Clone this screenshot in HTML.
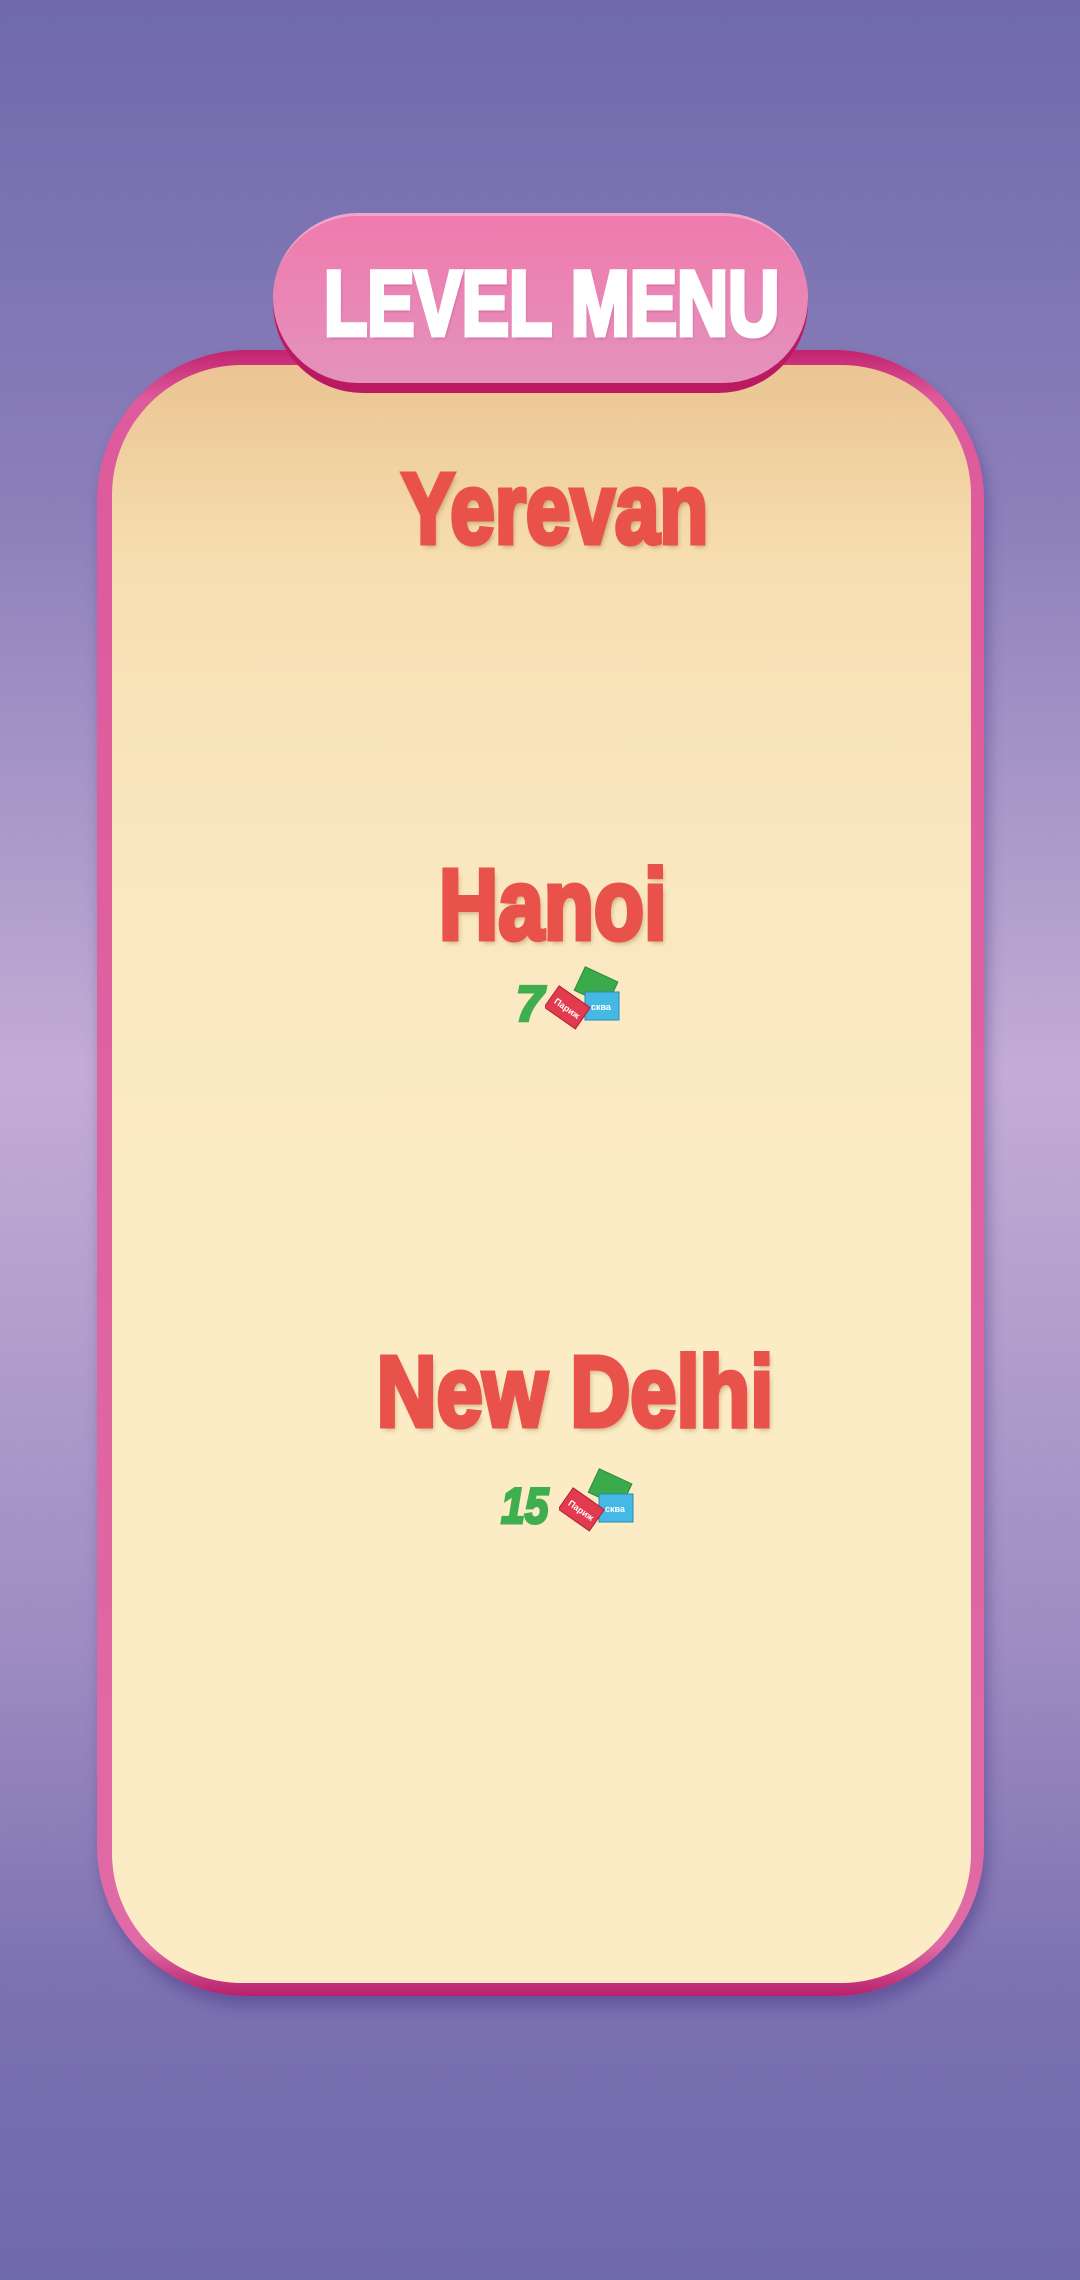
<!DOCTYPE html>
<html><head><meta charset="utf-8"><style>
html,body{margin:0;padding:0}
body{width:1080px;height:2280px;position:relative;overflow:hidden;font-family:"Liberation Sans",sans-serif;
background:linear-gradient(180deg,#6f6aab 0%,#8b7fba 22%,#c3acd5 47%,#9e8cc2 72%,#7a70b0 88%,#6f6aab 100%);}
.card{position:absolute;left:97px;top:350px;width:887px;height:1646px;box-sizing:border-box;border-radius:150px;
background:linear-gradient(180deg,#c2236f,#de5a9c 3%,#e06aa5 97%,#b8206a);
box-shadow:4px 10px 14px rgba(70,50,130,.45);}
.inner{position:absolute;left:15px;top:15px;right:13px;bottom:13px;border-radius:130px;
background:linear-gradient(180deg,#ebc492 0%,#f6deb0 12%,#fae7c0 30%,#fbecc6 55%,#fbecc6 100%);}
.pill{position:absolute;left:273px;top:213px;width:535px;height:180px;border-radius:90px;background:#bb1a63;}
.pill .top{position:absolute;left:0;top:0;right:0;height:170px;border-radius:86px;
background:linear-gradient(180deg,#f07aae,#e392bc);border-top:3px solid #efa6c9;box-sizing:border-box}
.t{position:absolute;left:0;width:1080px;text-align:center;white-space:nowrap}
.t span{display:inline-block;font-weight:bold}
.city span{color:#e8524a;font-size:100px;-webkit-text-stroke:5px #e8524a;text-shadow:3px 4px 5px rgba(150,100,50,.45)}
.num{position:absolute;color:#3fae4f;font-weight:bold;font-style:italic;font-size:50px;-webkit-text-stroke:3px #3fae4f}
</style></head><body>
<div class="card"><div class="inner"></div></div>
<div class="pill"><div class="top"></div></div>
<div class="t" style="top:252px;left:12px"><span style="color:#fff;font-size:92px;transform:scaleX(.77);-webkit-text-stroke:5px #fff;text-shadow:2px 3px 3px rgba(160,40,100,.5)">LEVEL MENU</span></div>
<div class="t city" style="top:452px;left:15px"><span style="transform:scaleX(.8)">Yerevan</span></div>
<div class="t city" style="top:848px;left:13px"><span style="transform:scaleX(.82)">Hanoi</span></div>
<div class="t city" style="top:1335px;left:35px"><span style="transform:scaleX(.83)">New Delhi</span></div>
<div class="num" style="left:516px;top:975px">7</div>
<div class="num" style="left:497px;top:1477px;transform:scaleX(.85)">15</div>
<svg style="position:absolute;left:545px;top:966px" width="80" height="66" viewBox="0 0 80 66">
<g transform="rotate(25 48 22)"><rect x="32" y="6" width="36" height="26" fill="#3aaa4a" stroke="#2a8a3a"/></g>
<rect x="40" y="26" width="34" height="28" fill="#45b9e6" stroke="#2a8ab0"/>
<text x="46" y="44" font-size="9" fill="#fff" font-family="Liberation Sans" font-weight="bold">сква</text>
<g transform="rotate(35 22 40)"><rect x="4" y="28" width="38" height="26" fill="#e23a4e" stroke="#b02035"/>
<text x="9" y="45" font-size="9" fill="#fff" font-family="Liberation Sans" font-weight="bold">Париж</text></g>
</svg>
<svg style="position:absolute;left:559px;top:1468px" width="80" height="66" viewBox="0 0 80 66">
<g transform="rotate(25 48 22)"><rect x="32" y="6" width="36" height="26" fill="#3aaa4a" stroke="#2a8a3a"/></g>
<rect x="40" y="26" width="34" height="28" fill="#45b9e6" stroke="#2a8ab0"/>
<text x="46" y="44" font-size="9" fill="#fff" font-family="Liberation Sans" font-weight="bold">сква</text>
<g transform="rotate(35 22 40)"><rect x="4" y="28" width="38" height="26" fill="#e23a4e" stroke="#b02035"/>
<text x="9" y="45" font-size="9" fill="#fff" font-family="Liberation Sans" font-weight="bold">Париж</text></g>
</svg>
</body></html>
